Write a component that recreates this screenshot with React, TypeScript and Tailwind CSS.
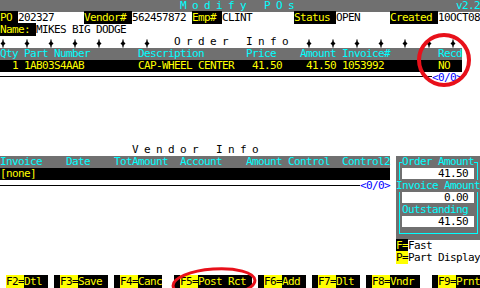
import React from "react";

// terminal grid: 80 cols x 24 rows, 6x12 px per cell
const GRAY = "bg-[#707070]";
const LBL = "bg-black text-[#ffff00]";
const KEY = "bg-[#ffff00] text-black";
const CYAN = "text-[#00ffff]";

function Row({ className = "", children }: { className?: string; children?: React.ReactNode }) {
  return <div className={`h-[12px] leading-[12px] whitespace-pre ${className}`}>{children}</div>;
}

function Diamond() {
  return (
    <svg width="6" height="12" viewBox="0 0 6 12" className="inline-block align-top">
      <line x1="3" y1="3.5" x2="3" y2="11.5" stroke="black" strokeWidth="1.2" />
      <polygon points="3,5 5.5,7.5 3,10 0.5,7.5" fill="black" />
    </svg>
  );
}

const diamondRow =
  "*   *   *   *   *   *   *    O r d e r   I n f o   *   *   *   *   *   *   *    ";

function Val({ children }: { children: React.ReactNode }) {
  return (
    <div className="ml-[2px] mb-[1px] h-[11px] w-[72px] bg-white pr-[6px] text-right leading-[11px] text-black">
      {children}
    </div>
  );
}

function FKey({ k, label, lead = true }: { k: string; label: string; lead?: boolean }) {
  return (
    <span className="bg-black text-[#ffff00]">
      {lead ? " " : ""}
      <span className={KEY}>{k}</span>
      {label}
    </span>
  );
}

export default function App() {
  return (
    <div className="relative h-[288px] w-[480px] overflow-hidden bg-white font-['DejaVu_Sans_Mono',monospace] text-[11px] tracking-[-0.6226px] text-black">
      <Row className={`${GRAY} ${CYAN}`}>
        {"                              M o d i f y   P O s                           v2.2"}
      </Row>
      <Row>
        <span className={LBL}>PO </span>
        {"202327     "}
        <span className={LBL}>Vendor# </span>
        {"562457872 "}
        <span className={LBL}>Emp# </span>
        {"CLINT       "}
        <span className={LBL}>Status </span>
        {"OPEN     "}
        <span className={LBL}>Created </span>
        {"10OCT08"}
      </Row>
      <Row>
        <span className={LBL}>Name: </span>
        MIKES BIG DODGE
      </Row>
      <Row>
        {diamondRow.split("").map((ch, i) => (ch === "*" ? <Diamond key={i} /> : <span key={i}>{ch}</span>))}
      </Row>

      <div className="w-[462px]">
        <Row className={`${GRAY} ${CYAN}`}>
          {"Qty Part Number        Description       Price    Amount Invoice#        Recd"}
        </Row>
        <Row className="bg-black text-[#ffff00]">
          {"  1 1AB03S4AAB         CAP-WHEEL CENTER   41.50    41.50 1053992         NO  "}
        </Row>
        <Row className="flex">
          <div className="mt-[4px] h-px w-[432px] bg-black" />
          <span className="text-[#0000ff]">{"<0/0>"}</span>
        </Row>
      </div>

      <div className="h-[60px]" />

      <Row>{"                      V e n d o r   I n f o"}</Row>

      <div className="flex">
        <div className="w-[390px]">
          <Row className={`${GRAY} ${CYAN}`}>
            {"Invoice    Date    TotAmount  Account    Amount Control  Control2"}
          </Row>
          <Row className="bg-black text-[#ffff00]">[none]</Row>
          <Row className="flex">
            <div className="mt-[5px] h-px w-[360px] bg-black" />
            <span className="text-[#0000ff]">{"<0/0>"}</span>
          </Row>
        </div>

        <div className="ml-[6px] w-[84px]">
          <div className={`${GRAY} h-[84px] w-[84px] pl-[3px] pr-[2px] pt-[6px]`}>
            <div className="flex h-[72px] flex-col border border-[#00ffff]">
              <div className={`${GRAY} ${CYAN} ml-[2px] -mt-[7px] h-[12px] w-[72px] leading-[12px] whitespace-pre`}>
                Order Amount
              </div>
              <Val>41.50</Val>
              <div className={`${GRAY} ${CYAN} -ml-[4px] h-[12px] w-[84px] leading-[12px] whitespace-pre`}>
                Invoice Amount
              </div>
              <Val>0.00</Val>
              <div className={`${GRAY} ${CYAN} ml-[2px] h-[12px] w-[72px] leading-[12px] whitespace-pre`}>
                Outstanding
              </div>
              <Val>41.50</Val>
            </div>
          </div>
          <Row>
            <span className={LBL}>F=</span>
            Fast
          </Row>
          <Row>
            <span className={KEY}>P=</span>
            Part Display
          </Row>
          <Row />
        </div>
      </div>

      <Row>
        {" "}
        <FKey k="F2=" label="Dtl " lead={false} />
        {" "}
        <FKey k="F3=" label="Save " />
        {" "}
        <FKey k="F4=" label="Canc" />
        {"  "}
        <FKey k="F5=" label="Post Rct " />
        {" "}
        <FKey k="F6=" label="Add " />
        {" "}
        <FKey k="F7=" label="Dlt " />
        {" "}
        <FKey k="F8=" label="Vndr " />
        {"  "}
        <FKey k="F9=" label="Prnt" />
      </Row>

      {/* red annotation marks */}
      <svg className="pointer-events-none absolute inset-0" width="480" height="288" viewBox="0 0 480 288">
        <ellipse cx="444" cy="60" rx="25" ry="25" fill="none" stroke="#e8101a" strokeWidth="4" />
        <ellipse
          cx="214"
          cy="283"
          rx="41"
          ry="14"
          fill="none"
          stroke="#e8101a"
          strokeWidth="3"
          transform="rotate(-4 214 283)"
        />
      </svg>
    </div>
  );
}
